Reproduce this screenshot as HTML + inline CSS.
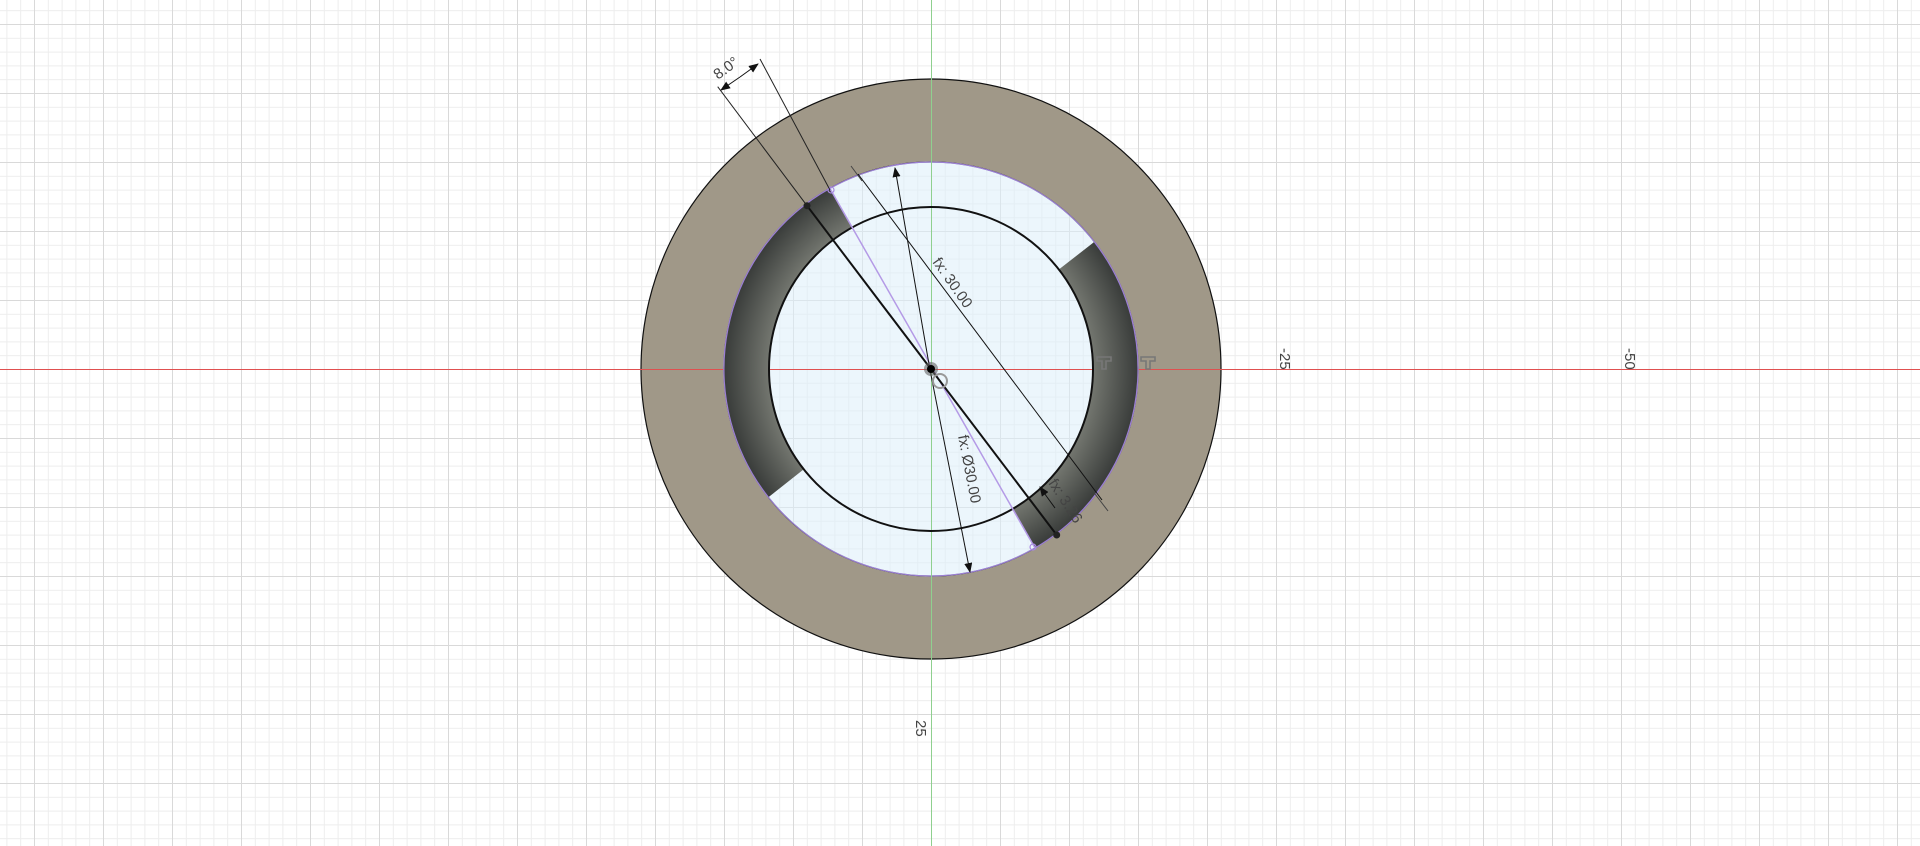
<!DOCTYPE html>
<html><head><meta charset="utf-8"><style>
html,body{margin:0;padding:0;background:#fff;overflow:hidden}
svg{display:block}
text{font-family:"Liberation Sans",sans-serif;fill:#444;font-size:15px}
</style></head><body>
<svg width="1920" height="846" viewBox="0 0 1920 846" xmlns="http://www.w3.org/2000/svg">
<defs>
<pattern id="minor" patternUnits="userSpaceOnUse" x="34" y="24" width="13.8" height="13.8">
<path d="M0.5 0V13.8M0 0.5H13.8" stroke="#ededed" stroke-width="1" fill="none"/>
</pattern>
<pattern id="major" patternUnits="userSpaceOnUse" x="34" y="24" width="69" height="69">
<path d="M0.5 0V69M0 0.5H69" stroke="#d9d9d9" stroke-width="1" fill="none"/>
</pattern>
<radialGradient id="dk" gradientUnits="userSpaceOnUse" cx="931" cy="369" r="207">
<stop offset="0.78" stop-color="#747770"/>
<stop offset="1" stop-color="#393c3a"/>
</radialGradient>
<marker id="ar" markerWidth="10" markerHeight="8" refX="9" refY="4" orient="auto" markerUnits="userSpaceOnUse">
<path d="M0 0L10 4L0 8z" fill="#111"/>
</marker>
</defs>
<rect width="1920" height="846" fill="#fff"/>
<rect width="1920" height="846" fill="url(#minor)"/>
<rect width="1920" height="846" fill="url(#major)"/>
<path d="M931 79a290 290 0 1 0 0.01 0Z M931 162a207 207 0 1 1 -0.01 0Z" fill="#a09888" fill-rule="evenodd" stroke="#111" stroke-width="1.2"/>
<circle cx="931" cy="369" r="207" fill="rgba(220,238,250,0.55)" stroke="#9b7fd4" stroke-width="1.2"/>
<line x1="0" y1="369.5" x2="1920" y2="369.5" stroke="#e05050" stroke-width="1"/>
<line x1="931.5" y1="0" x2="931.5" y2="846" stroke="#8fd08f" stroke-width="1"/>
<path d="M829.9 188.4A207 207 0 0 0 768.4 497.2L803.8 469.3A162 162 0 0 1 852.2 227.5Z" fill="url(#dk)"/>
<path d="M1094.3 241.9A207 207 0 0 1 1035 548L1012.8 509A162 162 0 0 0 1058.8 269.5Z" fill="url(#dk)"/>
<path d="M829.9 188.4A207 207 0 0 0 768.4 497.2 M1094.3 241.9A207 207 0 0 1 1035 548" fill="none" stroke="#9b7fd4" stroke-width="1.2"/>
<circle cx="931" cy="369" r="162" fill="none" stroke="#111" stroke-width="2"/>
<line x1="829.9" y1="188.4" x2="1035" y2="548" stroke="#b49ae6" stroke-width="1.5"/>
<line x1="807" y1="205.7" x2="1056.7" y2="535" stroke="#111" stroke-width="2"/>
<circle cx="807" cy="205.7" r="3.5" fill="#222"/>
<circle cx="1056.7" cy="535" r="3.5" fill="#222"/>
<circle cx="831" cy="190" r="3" fill="none" stroke="#a88ae0" stroke-width="1.2"/>
<circle cx="1033" cy="547" r="3" fill="none" stroke="#a88ae0" stroke-width="1.2"/>
<line x1="717.7" y1="86.7" x2="807" y2="205.7" stroke="#222" stroke-width="1"/>
<line x1="760" y1="59" x2="830" y2="190" stroke="#222" stroke-width="1"/>
<line x1="740" y1="77" x2="721" y2="90" stroke="#111" stroke-width="1" marker-end="url(#ar)"/>
<line x1="740" y1="77" x2="758" y2="64" stroke="#111" stroke-width="1" marker-end="url(#ar)"/>
<text x="0" y="0" transform="translate(718,80) rotate(-36)">8.0°</text>
<line x1="851" y1="166" x2="862" y2="181" stroke="#444" stroke-width="1"/>
<line x1="1095" y1="494" x2="1108" y2="511" stroke="#444" stroke-width="1"/>
<line x1="858" y1="174" x2="1102" y2="500" stroke="#111" stroke-width="1"/>
<text transform="translate(932,262) rotate(55)">fx: 30.00</text>
<line x1="930" y1="370" x2="895" y2="168" stroke="#111" stroke-width="1" marker-end="url(#ar)"/>
<line x1="930" y1="370" x2="970" y2="572" stroke="#111" stroke-width="1" marker-end="url(#ar)"/>
<text transform="translate(958,436) rotate(79)">fx: Ø30.00</text>
<line x1="1047" y1="497" x2="1040" y2="487" stroke="#111" stroke-width="1" marker-end="url(#ar)"/>
<line x1="1047" y1="497" x2="1055" y2="508" stroke="#111" stroke-width="1"/>
<text transform="translate(1048,483) rotate(57)" font-size="14">fx: 3.26</text>
<circle cx="940" cy="381" r="7" fill="none" stroke="#999" stroke-width="2"/>
<circle cx="931" cy="369" r="7" fill="#666" opacity="0.6"/>
<circle cx="931" cy="369" r="4" fill="#000"/>
<path d="M1097 357h14v4h-5v8h-4v-8h-5z" fill="none" stroke="#777" stroke-width="1.6"/>
<path d="M1141 357h14v4h-5v8h-4v-8h-5z" fill="none" stroke="#777" stroke-width="1.6"/>
<text transform="translate(1280,348) rotate(90)" font-size="14">-25</text>
<text transform="translate(1625,348) rotate(90)" font-size="14">-50</text>
<text transform="translate(916,720) rotate(90)" font-size="14">25</text>
</svg>
</body></html>
